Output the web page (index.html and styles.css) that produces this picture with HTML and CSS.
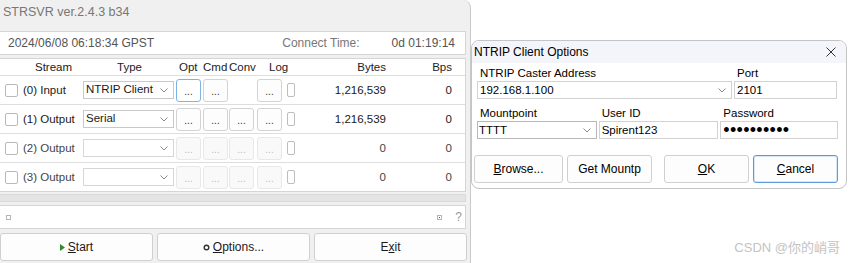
FILE: index.html
```html
<!DOCTYPE html>
<html lang="en">
  <head>
    <meta charset="UTF-8" />
    <title>STRSVR</title>
    <link rel="stylesheet" href="styles.css">
  </head>
  <body>
    <div class="screen">
      <div class="strsvr">
        <div class="titlebar">STRSVR ver.2.4.3 b34</div>

        <div class="panel timebar">
          <span class="utc">2024/06/08 06:18:34 GPST</span>
          <span class="conn-label">Connect Time:</span>
          <span class="conn-time">0d 01:19:14</span>
        </div>

        <div class="panel streams">
          <div class="srow head">
            <span class="h-stream">Stream</span>
            <span class="h-type">Type</span>
            <span class="h-opt">Opt</span>
            <span>Cmd</span>
            <span>Conv</span>
            <span class="h-log">Log</span>
            <span class="num">Bytes</span>
            <span class="num">Bps</span>
          </div>

          <div class="srow">
            <span class="chk"></span>
            <span class="sname">(0) Input</span>
            <span class="combo">NTRIP Client<svg width="8" height="5" viewBox="0 0 8 5"><polyline points="0.5,0.5 4,4 7.5,0.5" fill="none" stroke="#8a8a8a"/></svg></span>
            <button class="dots focus">...</button>
            <button class="dots">...</button>
            <span></span>
            <button class="dots">...</button>
            <span class="logchk"></span>
            <span class="num">1,216,539</span>
            <span class="num">0</span>
          </div>

          <div class="srow">
            <span class="chk"></span>
            <span class="sname">(1) Output</span>
            <span class="combo">Serial<svg width="8" height="5" viewBox="0 0 8 5"><polyline points="0.5,0.5 4,4 7.5,0.5" fill="none" stroke="#8a8a8a"/></svg></span>
            <button class="dots">...</button>
            <button class="dots">...</button>
            <button class="dots">...</button>
            <button class="dots">...</button>
            <span class="logchk"></span>
            <span class="num">1,216,539</span>
            <span class="num">0</span>
          </div>

          <div class="srow off">
            <span class="chk"></span>
            <span class="sname">(2) Output</span>
            <span class="combo"><span></span><svg width="8" height="5" viewBox="0 0 8 5"><polyline points="0.5,0.5 4,4 7.5,0.5" fill="none" stroke="#8a8a8a"/></svg></span>
            <button class="dots">...</button>
            <button class="dots">...</button>
            <button class="dots">...</button>
            <button class="dots">...</button>
            <span class="logchk"></span>
            <span class="num">0</span>
            <span class="num">0</span>
          </div>

          <div class="srow off">
            <span class="chk"></span>
            <span class="sname">(3) Output</span>
            <span class="combo"><span></span><svg width="8" height="5" viewBox="0 0 8 5"><polyline points="0.5,0.5 4,4 7.5,0.5" fill="none" stroke="#8a8a8a"/></svg></span>
            <button class="dots">...</button>
            <button class="dots">...</button>
            <button class="dots">...</button>
            <button class="dots">...</button>
            <span class="logchk"></span>
            <span class="num">0</span>
            <span class="num">0</span>
          </div>
        </div>

        <div class="hscroll"></div>

        <div class="panel status">
          <span class="sq"></span>
          <span class="status-right">
            <span class="sq dot"></span>
            <span class="help">?</span>
          </span>
        </div>

        <div class="actions">
          <button class="btn"><svg width="5" height="7" viewBox="0 0 5 7"><polygon points="0,0 5,3.5 0,7" fill="#2e8b2e"/></svg><span><u>S</u>tart</span></button>
          <button class="btn"><svg width="7" height="7" viewBox="0 0 7 7"><circle cx="3.5" cy="3.5" r="2.3" fill="none" stroke="#333" stroke-width="1.4"/></svg><span><u>O</u>ptions...</span></button>
          <button class="btn"><span>E<u>x</u>it</span></button>
        </div>
      </div>

      <div class="side">
        <div class="dialog">
          <div class="dlg-title">
            <span>NTRIP Client Options</span>
            <svg width="10" height="10" viewBox="0 0 10 10"><path d="M0.5 0.5 L9.5 9.5 M9.5 0.5 L0.5 9.5" stroke="#333" stroke-width="1"/></svg>
          </div>
          <div class="dlg-body">
            <div class="field-row">
              <div class="field f-addr">
                <label>NTRIP Caster Address</label>
                <div class="input combo-in">192.168.1.100<svg width="8" height="5" viewBox="0 0 8 5"><polyline points="0.5,0.5 4,4 7.5,0.5" fill="none" stroke="#8a8a8a"/></svg></div>
              </div>
              <div class="field f-port">
                <label>Port</label>
                <div class="input">2101</div>
              </div>
            </div>
            <div class="field-row second">
              <div class="field f-mount">
                <label>Mountpoint</label>
                <div class="input combo-in dark">TTTT<svg width="8" height="5" viewBox="0 0 8 5"><polyline points="0.5,0.5 4,4 7.5,0.5" fill="none" stroke="#8a8a8a"/></svg></div>
              </div>
              <div class="field f-user">
                <label>User ID</label>
                <div class="input">Spirent123</div>
              </div>
              <div class="field f-pass">
                <label>Password</label>
                <div class="input pass">••••••••••</div>
              </div>
            </div>
            <div class="dlg-buttons">
              <button class="dbtn b-browse"><u>B</u>rowse...</button>
              <button class="dbtn">Get Mountp</button>
              <button class="dbtn b-ok"><u>O</u>K</button>
              <button class="dbtn focus"><u>C</u>ancel</button>
            </div>
          </div>
        </div>
        <div class="watermark">CSDN @你的峭哥</div>
      </div>
    </div>
  </body>
</html>
```

FILE: styles.css
```css
* {
  box-sizing: border-box;
}
body {
  margin: 0;
  font-family: "Liberation Sans", Arial, sans-serif;
  font-size: 11.5px;
  color: #1a1a1a;
  background: #fff;
}
button {
  font-family: inherit;
  font-size: inherit;
  color: inherit;
  padding: 0;
}
.screen {
  display: flex;
  width: 865px;
  height: 263px;
  overflow: hidden;
}

/* main window */
.strsvr {
  flex: none;
  width: 471px;
  height: 263px;
  background: #f0f0f0;
  border-right: 1px solid #c9c9c9;
  border-top-right-radius: 8px;
}
.titlebar {
  height: 25px;
  line-height: 25px;
  padding-left: 3px;
  font-size: 12.5px;
  color: #777;
}
.panel {
  width: 466px;
  background: #fff;
  border: 1px solid #d5d5d5;
  border-left: none;
}
.timebar {
  margin-top: 6px;
  height: 24px;
  display: flex;
  align-items: center;
  color: #555;
  font-size: 12px;
}
.utc {
  flex: 1;
  padding-left: 8px;
}
.conn-label {
  color: #777;
  margin-right: 32px;
}
.conn-time {
  padding-right: 10px;
}

.streams {
  margin-top: 3px;
}
.srow {
  display: grid;
  grid-template-columns: 20px 63px 93px 27px 26px 27px 28px 12px 1fr 66px;
  align-items: center;
  height: 29px;
  padding-right: 13px;
  border-bottom: 1px solid #dedede;
}
.srow:last-child {
  height: 28px;
  border-bottom: none;
}
.srow.head {
  height: 17px;
  color: #222;
}
.h-stream {
  grid-column: span 2;
  padding-left: 35px;
}
.h-type {
  padding-left: 34px;
}
.h-opt {
  padding-left: 3px;
}
.h-log {
  grid-column: span 2;
  padding-left: 13px;
}
.num {
  text-align: right;
}
.chk {
  width: 13px;
  height: 13px;
  margin-left: 5px;
  border: 1px solid #b9b9b9;
  border-radius: 2px;
  background: #fff;
}
.sname {
  padding-left: 3px;
  white-space: nowrap;
}
.combo {
  width: 91px;
  height: 18px;
  display: flex;
  align-items: center;
  justify-content: space-between;
  padding: 0 5px 2px 2px;
  border: 1px solid #c9c9c9;
  background: #fff;
}
.combo svg {
  margin-top: 2px;
}
.dots {
  width: 25px;
  height: 23px;
  border: 1px solid #d3d3d3;
  border-radius: 3px;
  background: #fdfdfd;
  font-size: 10px;
  color: #333;
  padding-top: 3px;
}
.dots.focus {
  border-color: #7fb2e5;
  background: #fff;
}
.srow > .dots:nth-child(7) {
  margin-left: 1px;
}
.logchk {
  width: 8px;
  height: 14px;
  margin-left: 3px;
  border: 1px solid #bdbdbd;
  border-radius: 2px;
  background: #fff;
}
.off .sname,
.off .num {
  color: #444;
}
.off .combo {
  border-color: #d6d6d6;
}
.off .dots {
  border-color: #e8e8e8;
  background: #f9f9f9;
  color: #bbb;
}

.hscroll {
  width: 466px;
  height: 8px;
  margin-top: 2px;
  background: #e4e4e4;
  border: 1px solid #d9d9d9;
  border-left: none;
}
.status {
  margin-top: 3px;
  height: 24px;
  display: flex;
  align-items: center;
  justify-content: space-between;
  padding: 0 3px 0 6px;
}
.sq {
  width: 5px;
  height: 5px;
  border: 1px solid #b5b5b5;
}
.status-right {
  display: flex;
  align-items: center;
  gap: 13px;
}
.sq.dot {
  background: radial-gradient(circle, #555 40%, transparent 45%);
}
.help {
  color: #999;
  font-size: 12px;
}
.actions {
  margin-top: 4px;
  width: 467px;
  display: flex;
  gap: 4px;
}
.btn {
  flex: 1;
  height: 28px;
  display: flex;
  align-items: center;
  justify-content: center;
  gap: 3px;
  border: 1px solid #d0d0d0;
  border-radius: 3px;
  background: #fdfdfd;
  font-size: 12px;
}

/* NTRIP dialog */
.side {
  flex: 1;
}
.dialog {
  width: 376px;
  height: 149px;
  margin-top: 40px;
  border: 1px solid #c4c4c4;
  border-radius: 8px;
  background: #fff;
  overflow: hidden;
}
.dlg-title {
  height: 22px;
  display: flex;
  align-items: center;
  justify-content: space-between;
  padding: 0 10px 0 2px;
  background: #f3f5fa;
  font-size: 12px;
  color: #000;
}
.dlg-body {
  padding: 3px 8px 0 5px;
}
.field-row {
  display: flex;
  gap: 2px;
}
.field-row.second {
  margin-top: 7px;
}
.field label {
  display: block;
  line-height: 14px;
  margin-bottom: 1px;
  padding-left: 3px;
  color: #000;
}
.input {
  height: 18px;
  display: flex;
  align-items: center;
  justify-content: space-between;
  padding: 0 2px;
  border: 1px solid #d2d2d2;
  background: #fff;
  color: #000;
}
.combo-in {
  padding-right: 5px;
}
.input.dark {
  border-color: #b8b8b8;
  padding-left: 1px;
}
.pass {
  font-size: 18px;
  letter-spacing: 0.3px;
  justify-content: flex-start;
}
.f-addr {
  width: 255px;
}
.f-port {
  width: 103px;
}
.f-mount {
  width: 120px;
}
.f-user {
  width: 120px;
}
.f-pass {
  width: 118px;
}
.dlg-buttons {
  display: flex;
  gap: 4px;
  margin-top: 16px;
  margin-left: -3px;
}
.dbtn {
  width: 85px;
  height: 28px;
  border: 1px solid #d0d0d0;
  border-radius: 3px;
  background: #fdfdfd;
  color: #000;
  font-size: 12px;
}
.b-browse {
  width: 89px;
}
.b-ok {
  margin-left: 8px;
}
.dbtn.focus {
  border-color: #5b9bdc;
  box-shadow: inset 0 0 0 1px #d6e8f8;
}
.watermark {
  margin-top: 51px;
  padding-right: 25px;
  text-align: right;
  line-height: 16px;
  font-family: "Liberation Sans", "Noto Sans CJK SC", sans-serif;
  font-size: 13px;
  color: #c4c4c4;
}
```
